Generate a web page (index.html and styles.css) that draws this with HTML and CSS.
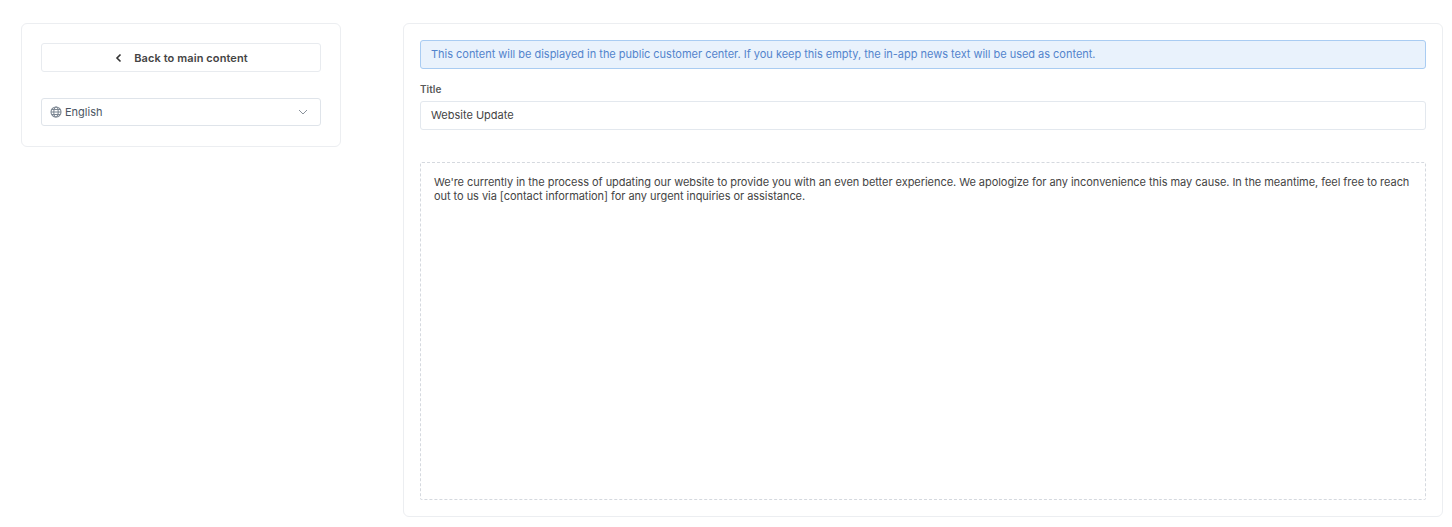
FILE: index.html
```html
<!DOCTYPE html>
<html lang="en">
<head>
<meta charset="utf-8">
<title>Website Update</title>
<link rel="stylesheet" href="styles.css">
</head>
<body>
<div class="page">
  <aside class="card side">
    <button class="back" type="button">
      <svg class="back-icon" viewBox="0 0 10 10" width="10" height="10"><path d="M8.5 1.5 5 5l3.5 3.5" fill="none" stroke="#333" stroke-width="1.6"/></svg>
      <span>Back to main content</span>
    </button>
    <div class="select">
      <svg class="globe" viewBox="0 0 12 12" width="12" height="12"><g fill="none" stroke="#7d8793" stroke-width="1.1"><circle cx="6" cy="6" r="5"/><ellipse cx="6" cy="6" rx="2.2" ry="5"/><path d="M1 6h10M1.7 3.5h8.6M1.7 8.5h8.6"/></g></svg>
      <span class="select-label">English</span>
      <svg class="chev" viewBox="0 0 10 6" width="10" height="6"><path d="M1 1l4 4 4-4" fill="none" stroke="#8a929c" stroke-width="1"/></svg>
    </div>
  </aside>
  <main class="card content">
    <div class="alert">This content will be displayed in the public customer center. If you keep this empty, the in-app news text will be used as content.</div>
    <div class="label">Title</div>
    <div class="input">Website Update</div>
    <div class="editor">We're currently in the process of updating our website to provide you with an even better experience. We apologize for any inconvenience this may cause. In the meantime, feel free to reach out to us via [contact information] for any urgent inquiries or assistance.</div>
  </main>
</div>
</body>
</html>
```
FILE: styles.css
```css
* { box-sizing: border-box; }
html, body { margin: 0; height: 100%; background: #fff; }
body { font-family: Inter, "Open Sans", sans-serif; font-size: 11px; color: #3a3a3a; overflow: hidden; }
.page { display: flex; align-items: flex-start; gap: 62px; padding: 23px 9px 10px 21px; height: 527px; }
.card { background: #fff; border: 1px solid #eceef1; border-radius: 6px; }
.side { width: 320px; flex: none; padding: 19px; display: flex; flex-direction: column; gap: 26px; height: 124px; }
.back { height: 29px; width: 100%; display: flex; align-items: center; justify-content: center; gap: 12px; background: #fff; border: 1px solid #e8ebef; border-radius: 3px; font: 600 11px Inter, sans-serif; letter-spacing: 0.1px; color: #444; padding: 0 2px 0 0; }
.select { height: 28px; display: flex; align-items: center; gap: 3px; padding: 0 12px 0 8px; border: 1px solid #dfe4ea; border-radius: 3px; color: #4b5563; }
.select-label { flex: 1; }
.content { flex: 1; height: 494px; padding: 16px; display: flex; flex-direction: column; }
.alert { height: 29px; display: flex; align-items: center; padding: 0 10px 1px; background: #e9f2fc; border: 1px solid #a9ccf2; border-radius: 3px; color: #5384cc; white-space: nowrap; letter-spacing: -0.022px; }
.label { margin-top: 14px; height: 18px; font-size: 10px; font-weight: 600; color: #5a5a5a; }
.input { height: 29px; display: flex; align-items: center; padding: 0 10px 1px; border: 1px solid #e3e8ee; border-radius: 3px; color: #444; }
.editor { margin-top: 32px; flex: 1; padding: 12px 4px 12px 13px; border: 1px dashed #d5d9df; border-radius: 2px; line-height: 14px; color: #444; letter-spacing: -0.045px; }
```
